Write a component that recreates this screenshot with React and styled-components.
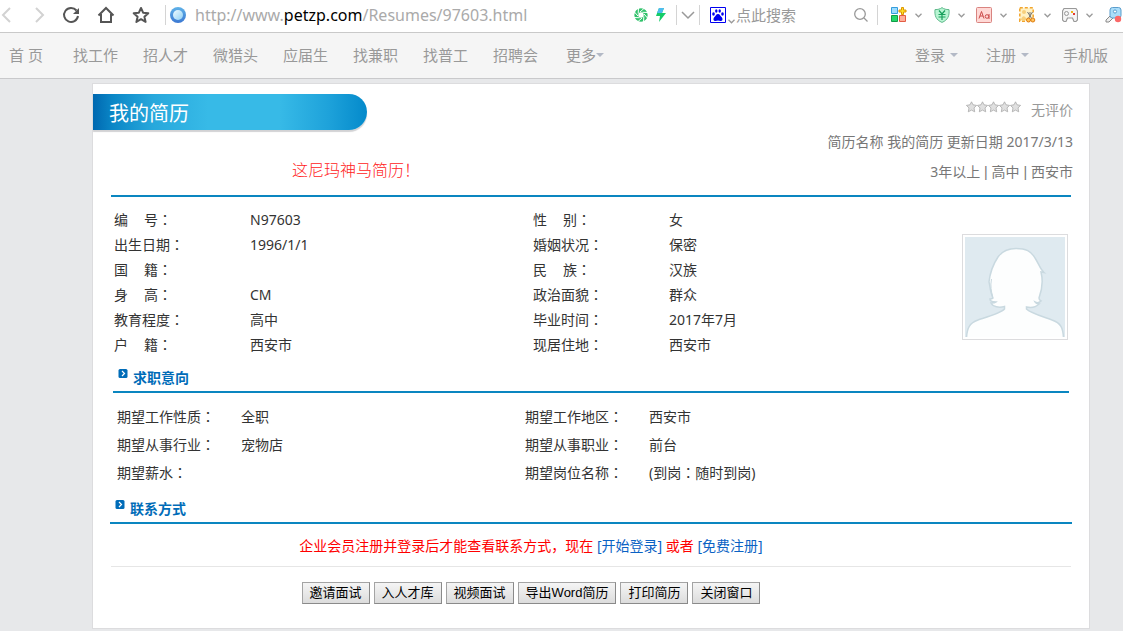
import React from "react";
import styled, { createGlobalStyle } from "styled-components";

const colors = {
  line: "#0a86c0",
  title: "#006cb8",
  link: "#0a62c4",
  border: "#dcdcde",
  muted: "#999",
  text: "#333"
};

const GlobalStyle = createGlobalStyle`
  * {
    box-sizing: border-box;
  }
  body {
    margin: 0;
    background: #e7e8ea;
    color: ${colors.text};
    font-family: "Noto Sans", "Noto Sans CJK SC", sans-serif;
    font-size: 14px;
  }
  a {
    text-decoration: none;
  }
`;

const Toolbar = styled.header`
  display: flex;
  align-items: center;
  height: 33px;
  padding-bottom: 2px;
  overflow: hidden;
  background: #fff;
  border-bottom: 1px solid #c9c9c9;
`;

const IconButton = styled.button`
  display: flex;
  flex: none;
  padding: 0;
  margin-right: ${props => props.$after || 0}px;
  border: 0;
  background: none;
`;

const EngineToggle = styled(IconButton)`
  align-self: flex-end;
  padding-bottom: 6px;
`;

const Divider = styled.span`
  flex: none;
  width: 1px;
  height: 20px;
  margin-right: ${props => props.$after}px;
  background: #d4d4d4;
`;

const Address = styled.div`
  flex: 1;
  padding-left: 9px;
  color: #aaa;
  font-size: 16px;
  line-height: 28px;
  white-space: nowrap;
`;

const Host = styled.span`
  color: #000;
`;

const SearchInput = styled.input`
  width: 118px;
  padding: 0;
  border: 0;
  outline: 0;
  background: none;
  font: inherit;
  font-size: 15px;
  line-height: 28px;

  &::placeholder {
    color: ${colors.muted};
    opacity: 1;
  }
`;

const Nav = styled.nav`
  display: flex;
  align-items: center;
  gap: 25px;
  height: 46px;
  padding: 0 15px 2px 9px;
  background: #f5f5f5;
  border-bottom: 1px solid #c9c9cb;
`;

const NavLink = styled.a`
  display: flex;
  align-items: center;
  gap: ${props => (props.$wide ? 5 : 0)}px;
  color: ${colors.muted};
  font-size: 15px;
  line-height: 22px;
  white-space: nowrap;
`;

const HomeLink = styled(NavLink)`
  margin-right: 5px;
`;

const MoreLink = styled(NavLink)`
  margin-left: 3px;
`;

const MobileLink = styled(NavLink)`
  margin-left: 6px;
`;

const Account = styled.div`
  display: flex;
  gap: 28px;
  margin-left: auto;
`;

const Caret = styled.span`
  border: 4px solid transparent;
  border-top-color: #b3b9c6;
  border-bottom: 0;
`;

const Card = styled.main`
  margin: 4px 33px 2px 92px;
  padding: 10px 0 24px;
  background: #fff;
  border: 1px solid ${colors.border};
`;

const CardHeader = styled.div`
  display: flex;
  justify-content: space-between;
  height: 101px;
  padding-right: 16px;
`;

const Banner = styled.h1`
  width: 274px;
  height: 36px;
  margin: 0;
  padding: 2px 0 0 16px;
  border-radius: 0 18px 18px 0;
  background: linear-gradient(
    90deg,
    #0068b0 0%,
    #0a86c6 7%,
    #28a8dc 22%,
    #37bae7 42%,
    #37bae7 68%,
    #1ea2da 86%,
    #048acb 100%
  );
  box-shadow: 0 2px 1px #d2d2d4;
  color: #fff;
  font-size: 20px;
  font-weight: 400;
  line-height: 36px;
`;

const Motto = styled.h2`
  margin: 28px 0 0 199px;
  color: #f22;
  font-size: 16px;
  font-weight: 300;
  line-height: 24px;
`;

const Summary = styled.div`
  color: #777;
  line-height: 30px;
  text-align: right;
`;

const Rating = styled.div`
  display: flex;
  justify-content: flex-end;
  gap: 10px;
  height: 33px;
  color: ${colors.muted};
  line-height: 32px;

  svg {
    margin-top: 7px;
  }
`;

const Bar = styled.span`
  font-family: "Liberation Sans", sans-serif;

  &::before {
    content: " | ";
    white-space: pre;
  }
`;

const Rule = styled.hr`
  height: ${props => (props.$light ? 1 : 2)}px;
  margin: 0 18px;
  border: 0;
  background: ${props => (props.$light ? "#e6e6e6" : colors.line)};
`;

const Profile = styled.div`
  display: flex;
  align-items: flex-start;
  justify-content: space-between;
  padding: 10px 21px 10px;
`;

const Photo = styled.div`
  display: flex;
  margin-top: 27px;
  padding: 2px;
  border: 1px solid ${colors.border};
`;

const FieldTable = styled.table`
  border-collapse: collapse;
  line-height: ${props => props.$row}px;

  th,
  td {
    padding: 0;
    font-weight: 400;
    text-align: left;
    white-space: nowrap;
  }
  th {
    width: ${props => props.$label}px;
  }
  td {
    width: ${props => props.$value}px;
  }
`;

const Label = styled.span`
  display: flex;
`;

const Spread = styled.span`
  display: flex;
  gap: 16px;
`;

// centred full-width colon
const Colon = styled.span`
  font-family: "Noto Sans", "Noto Sans CJK TC", sans-serif;

  &::before {
    content: "：";
  }
`;

const SectionTitle = styled.h3`
  display: flex;
  gap: 5px;
  margin: 0 20px;
  padding: 0 5px 2px;
  border-bottom: 2px solid ${colors.line};
  color: ${colors.title};
  font-size: 14px;
  line-height: 22px;

  svg {
    margin-top: 2px;
  }
`;

const ContactTitle = styled(SectionTitle)`
  margin: 11px 17px 0;
`;

const Wishes = styled.div`
  padding: 10px 24px 0;
`;

const Notice = styled.p`
  margin: 0;
  padding: 8px 120px 6px 0;
  color: #f00;
  line-height: 28px;
  text-align: center;

  a {
    color: ${colors.link};
  }
`;

const Actions = styled.div`
  display: flex;
  justify-content: center;
  gap: 4px;
  padding: 15px 120px 0 0;
`;

const ActionButton = styled.button`
  height: 22px;
  padding: 0 7px;
  border: 1px solid #8c8c8c;
  border-color: #a4a4a4 #8a8a8a #8a8a8a #a4a4a4;
  background: linear-gradient(#f5f5f5, #dcdcdc);
  color: #000;
  font-family: "Liberation Sans", "Noto Sans CJK SC", sans-serif;
  font-size: 13px;
  line-height: 20px;
  white-space: nowrap;
`;

const BackIcon = ({ flip }) => (
  <svg width="12" height="18" viewBox="0 0 12 18" fill="none" stroke="#d2d2d2" strokeWidth="2">
    <path d={flip ? "M2 2l7 7-7 7" : "M10 2L3 9l7 7"} />
  </svg>
);

const ReloadIcon = () => (
  <svg width="18" height="18" viewBox="0 0 18 18" fill="none" stroke="#555" strokeWidth="2">
    <path d="M14.5 4.5A7 7 0 1 0 16 10" />
    <path d="M17 2v6h-6z" fill="#555" stroke="none" />
  </svg>
);

const HomeIcon = () => (
  <svg width="18" height="18" viewBox="0 0 18 18" fill="none" stroke="#555" strokeWidth="2">
    <path d="M1.500 9.500L9 2l7.500 7.500M4 8v8h10V8" />
  </svg>
);

const StarIcon = () => (
  <svg width="18" height="18" viewBox="0 0 18 18" fill="none" stroke="#555" strokeWidth="2" strokeLinejoin="round">
    <path d="M9 2l2.100 4.700 5.200.5-3.900 3.500 1.200 5.200L9 13.200l-4.600 2.700 1.200-5.200-3.900-3.500 5.200-.5z" />
  </svg>
);

const SiteIcon = () => (
  <svg width="16" height="16" viewBox="0 0 16 16">
    <defs>
      <linearGradient id="ring" x2="0" y2="1">
        <stop offset="0" stopColor="#5fb2e8" />
        <stop offset="1" stopColor="#3c78d2" />
      </linearGradient>
      <linearGradient id="glass" x2="1" y2="1">
        <stop offset="0" stopColor="#f0fbff" />
        <stop offset="1" stopColor="#8fd1f5" />
      </linearGradient>
    </defs>
    <circle cx="8" cy="8" r="8" fill="url(#ring)" />
    <circle cx="8" cy="8" r="5" fill="url(#glass)" />
  </svg>
);

const ApertureIcon = () => (
  <svg width="14" height="14" viewBox="-7 -7 14 14">
    <circle r="4.700" fill="none" stroke="#31c26b" strokeWidth="4" />
    {[0, 45, 90, 135, 180, 225, 270, 315].map(angle => (
      <path key={angle} d="M-1 -3L3.500 -7" stroke="#fff" transform={`rotate(${angle})`} />
    ))}
  </svg>
);

const BoltIcon = () => (
  <svg width="10" height="14" viewBox="0 0 10 14">
    <path d="M3 0h5L6 5h4L3 14l1-6H0z" fill="#14cc68" />
    <path d="M3 0h5L6 5H1z" fill="#4ebcf0" />
  </svg>
);

const ChevronIcon = ({ width = 7, height = 5, color = "#999" }) => (
  <svg width={width} height={height} viewBox="0 0 14 9" fill="none" stroke={color} strokeWidth={width > 10 ? 1.5 : 2.5}>
    <path d="M1 1l6 6 6-6" />
  </svg>
);

const PawIcon = () => (
  <svg width="16" height="16" viewBox="0 0 16 16" fill="#0000f0">
    <path d="M.5.5h15v15H.5z" fill="#fff" stroke="#0000f0" />
    <ellipse cx="3.500" cy="7" rx="1.300" ry="1.700" />
    <ellipse cx="6.300" cy="4" rx="1.200" ry="1.700" />
    <ellipse cx="9.700" cy="4" rx="1.200" ry="1.700" />
    <ellipse cx="12.500" cy="7" rx="1.300" ry="1.700" />
    <path d="M8 7c2 0 2 1.500 3.500 3s1.500 4-1 4c-1 0-1.500-.4-2.500-.4s-1.500.4-2.500.4c-2.500 0-2.500-2.500-1-4S6 7 8 7z" />
  </svg>
);

const SearchIcon = () => (
  <svg width="14" height="14" viewBox="0 0 14 14" fill="none" stroke="#999" strokeWidth="1.300">
    <circle cx="6" cy="6" r="5.300" />
    <path d="M10 10l3.500 3.500" />
  </svg>
);

const AppsIcon = () => (
  <svg width="16" height="16" viewBox="0 0 16 16">
    <path d="M.5.5h6v6h-6z" fill="#9bdcff" stroke="#359ddb" />
    <path d="M.5 8.500h6v6h-6z" fill="#23d86a" stroke="#129c48" />
    <path d="M8.500 8.500h6v6h-6z" fill="#ffb09b" stroke="#e35d45" />
    <path d="M10.500.5h2v2.500h2.500v2h-2.500v2.500h-2V5H8V3h2.500z" fill="#ffdf28" stroke="#dd9600" />
  </svg>
);

const ShieldIcon = () => (
  <svg width="16" height="16" viewBox="0 0 16 16" fill="none" stroke="#18a05c">
    <path d="M8 .6c2 1.500 4 2 7 2 .6 6-1 10.400-7 12.800C2 13 .4 8.600 1 2.600c3 0 5-.5 7-2z" fill="#b8f5d3" stroke="#5fb98b" />
    <path d="M5 3.500L8 7l3-3.500M4.500 7.500h7M4.500 10h7M8 7v6" strokeWidth="1.200" />
  </svg>
);

const DictIcon = () => (
  <svg width="16" height="16" viewBox="0 0 16 16" fill="none" stroke="#cb4b4b">
    <rect x=".5" y=".5" width="15" height="15" rx="1" fill="#ffd9d6" stroke="#d98480" />
    <path d="M3 11.500l2.500-7 2.500 7M4 9h3" />
    <circle cx="11" cy="9.500" r="1.800" />
    <path d="M13 7v5" />
  </svg>
);

const ClipIcon = () => (
  <svg width="17" height="16" viewBox="0 0 17 16" fill="none">
    <path d="M.8.8h13.400v13.400H.8z" fill="#fff1c4" stroke="#f2a52c" strokeWidth="1.500" strokeDasharray="3 2" />
    <circle cx="5" cy="5" r="2" fill="#f7cf7c" />
    <path d="M2 13c1-5 4-5 6 0z" fill="#f7cf7c" />
    <path d="M8.500 5l4.500 7M13.500 5L9 12M11 5v5" stroke="#777" />
    <circle cx="9.500" cy="13" r="2" fill="#ffc35d" stroke="#df7e14" />
    <circle cx="13.800" cy="13" r="2" fill="#ffc35d" stroke="#df7e14" />
  </svg>
);

const GameIcon = () => (
  <svg width="16" height="16" viewBox="0 0 16 16" fill="none" stroke="#999">
    <path d="M2 1.500h12L15.500 4v9L14 14.500h-2L10.500 11h-5L4 14.500H2L.5 13V4z" fill="#f5f5f5" strokeWidth="1.200" />
    <circle cx="4.500" cy="6.500" r="2" />
    <path d="M9 4h2v2H9z" fill="#eeb818" stroke="none" />
    <path d="M11 6h2v2h-2z" fill="#e33a32" stroke="none" />
  </svg>
);

const KeyIcon = () => (
  <svg width="18" height="16" viewBox="0 0 18 16">
    <path d="M6 8l3 2-5 5H1v-2z" fill="#eee" stroke="#888" />
    <rect x="5" y=".5" width="11" height="10.500" rx="2.500" fill="#a9ddfa" stroke="#5a9dcc" />
    <circle cx="10" cy="4.500" r="1.600" fill="#fff" stroke="#5a9dcc" />
    <circle cx="13" cy="12" r="3.200" fill="#fa6868" />
  </svg>
);

const Stars = () => (
  <svg width="55" height="12" viewBox="0 0 55 12" fill="#e0e0e0" stroke="#aaa" strokeWidth=".8">
    {[0, 11, 22, 33, 44].map(x => (
      <path
        key={x}
        transform={`translate(${x})`}
        d="M5.500.8l1.500 3 3.600.6-2.600 2.500.7 3.900-3.200-1.700-3.200 1.700.7-3.900L.4 4.400 4 3.800z"
      />
    ))}
  </svg>
);

const ArrowIcon = () => (
  <svg width="10" height="10" viewBox="0 0 10 10">
    <rect x=".5" width="9" height="9" rx="1.500" fill="#006cb8" />
    <path d="M4 2l2.500 2.500L4 7" fill="none" stroke="#fff" strokeWidth="1.200" />
  </svg>
);

const AvatarIcon = () => (
  <svg width="100" height="100" viewBox="0 0 100 100">
    <path d="M0 0h100v100H0z" fill="#dfeaf0" />
    <path
      d="M1.500 101C2 92 4 86 13 83C22 80 36 76 39.500 72V69.500C34 71 28 70 26 66C28 66 30 66 31 65C28 65 25 64 25 62C27 62 27 62 28 61C25 55 25 48 24 45C25 36 29 26 33 20C38 13 45 11.500 51 11.500C61 11.500 66 14 70 21C74 27 75 32 79 35.500L76 35C78 43 77 53 74 61C74 62 74 63 76 64C74 66 72 66 70 65C71 67 72 67 74 67C71 70 66 71 61.500 70V72C65 76 79 80 87 83C96 86 98 91 98.500 101z"
      fill="#fdfefe"
      stroke="#c9d9e0"
      strokeWidth="1.500"
    />
    <path d="M26.500 42c-1.500 7 0 13 1 17" fill="none" stroke="#c9d9e0" />
  </svg>
);

const tools = [
  ["应用", AppsIcon, 12],
  ["安全", ShieldIcon, 11],
  ["翻译", DictIcon, 12],
  ["截图", ClipIcon, 11],
  ["游戏", GameIcon, 12]
];

const links = ["找工作", "招人才", "微猎头", "应届生", "找兼职", "找普工", "招聘会"];

const profile = [
  ["编 号", "N97603", "性 别", "女"],
  ["出生日期", "1996/1/1", "婚姻状况", "保密"],
  ["国 籍", "", "民 族", "汉族"],
  ["身 高", "CM", "政治面貌", "群众"],
  ["教育程度", "高中", "毕业时间", "2017年7月"],
  ["户 籍", "西安市", "现居住地", "西安市"]
];

const wishes = [
  ["期望工作性质", "全职", "期望工作地区", "西安市"],
  ["期望从事行业", "宠物店", "期望从事职业", "前台"],
  ["期望薪水", "", "期望岗位名称", <>(到岗<Colon />随时到岗)</>]
];

const actions = ["邀请面试", "入人才库", "视频面试", "导出Word简历", "打印简历", "关闭窗口"];

const FieldName = ({ name }) => (
  <th scope="row">
    <Label>
      <Spread>
        {name.split(" ").map(part => (
          <span key={part}>{part}</span>
        ))}
      </Spread>
      <Colon />
    </Label>
  </th>
);

const Fields = ({ rows, ...rest }) => (
  <FieldTable {...rest}>
    <tbody>
      {rows.map(([name, value, otherName, otherValue]) => (
        <tr key={name}>
          <FieldName name={name} />
          <td>{value}</td>
          <FieldName name={otherName} />
          <td>{otherValue}</td>
        </tr>
      ))}
    </tbody>
  </FieldTable>
);

const BrowserBar = () => (
  <Toolbar>
    <IconButton aria-label="后退" $after={22}><BackIcon /></IconButton>
    <IconButton aria-label="前进" $after={16}><BackIcon flip /></IconButton>
    <IconButton aria-label="刷新" $after={17}><ReloadIcon /></IconButton>
    <IconButton aria-label="主页" $after={17}><HomeIcon /></IconButton>
    <IconButton aria-label="收藏" $after={15}><StarIcon /></IconButton>
    <Divider $after={4} />
    <IconButton aria-label="网站信息"><SiteIcon /></IconButton>
    <Address>
      http://www.<Host>petzp.com</Host>/Resumes/97603.html
    </Address>
    <IconButton aria-label="兼容模式" $after={8}><ApertureIcon /></IconButton>
    <IconButton aria-label="极速模式" $after={10}><BoltIcon /></IconButton>
    <Divider $after={4} />
    <IconButton aria-label="展开" $after={4}><ChevronIcon width={14} height={9} /></IconButton>
    <Divider $after={10} />
    <IconButton aria-label="搜索引擎" $after={2}><PawIcon /></IconButton>
    <EngineToggle aria-label="切换引擎" $after={1}><ChevronIcon /></EngineToggle>
    <SearchInput aria-label="搜索" placeholder="点此搜索" />
    <IconButton aria-label="开始搜索" $after={9}><SearchIcon /></IconButton>
    <Divider $after={13} />
    {tools.map(([name, Icon, after]) => (
      <React.Fragment key={name}>
        <IconButton aria-label={name} $after={8}><Icon /></IconButton>
        <IconButton aria-label={`${name}菜单`} $after={after}><ChevronIcon /></IconButton>
      </React.Fragment>
    ))}
    <IconButton aria-label="密码"><KeyIcon /></IconButton>
  </Toolbar>
);

const SiteNav = () => (
  <Nav>
    <HomeLink href="#home">首 页</HomeLink>
    {links.map(link => (
      <NavLink key={link} href="#list">{link}</NavLink>
    ))}
    <MoreLink href="#more">更多<Caret /></MoreLink>
    <Account>
      <NavLink href="#login" $wide>登录<Caret /></NavLink>
      <NavLink href="#register" $wide>注册<Caret /></NavLink>
      <MobileLink href="#mobile">手机版</MobileLink>
    </Account>
  </Nav>
);

class App extends React.Component {
  render() {
    return (
      <>
        <GlobalStyle />
        <BrowserBar />
        <SiteNav />
        <Card>
          <CardHeader>
            <div>
              <Banner>我的简历</Banner>
              <Motto>这尼玛神马简历！</Motto>
            </div>
            <Summary>
              <Rating><Stars />无评价</Rating>
              <div>简历名称 我的简历 更新日期 2017/3/13</div>
              <div>3年以上<Bar />高中<Bar />西安市</div>
            </Summary>
          </CardHeader>
          <Rule />
          <Profile>
            <Fields rows={profile} $row={25} $label={136} $value={283} />
            <Photo><AvatarIcon /></Photo>
          </Profile>
          <SectionTitle><ArrowIcon />求职意向</SectionTitle>
          <Wishes>
            <Fields rows={wishes} $row={28} $label={124} $value={284} />
          </Wishes>
          <ContactTitle><ArrowIcon />联系方式</ContactTitle>
          <Notice>
            企业会员注册并登录后才能查看联系方式，现在{" "}
            <a href="#login">[开始登录]</a> 或者 <a href="#register">[免费注册]</a>
          </Notice>
          <Rule $light />
          <Actions>
            {actions.map(action => (
              <ActionButton key={action}>{action}</ActionButton>
            ))}
          </Actions>
        </Card>
      </>
    );
  }
}

export default App;
